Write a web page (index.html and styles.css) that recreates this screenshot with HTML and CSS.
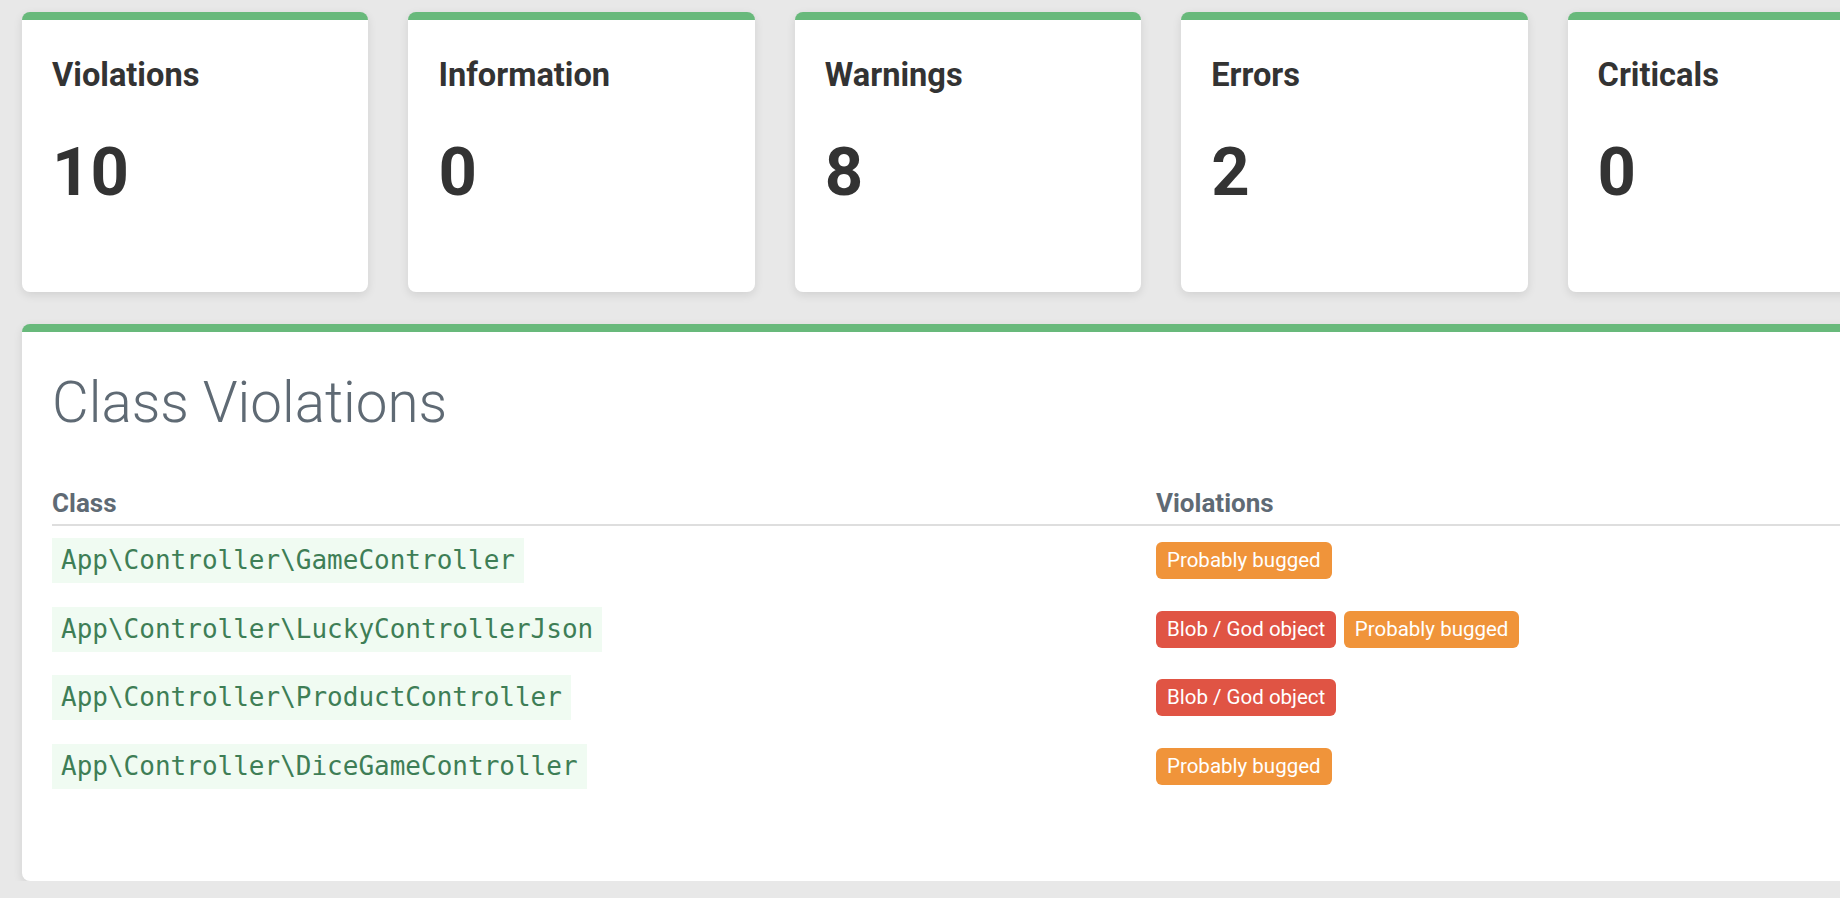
FILE: index.html
```html
<!DOCTYPE html>
<html lang="en">
<head>
<meta charset="utf-8">
<title>Class Violations</title>
<link rel="stylesheet" href="styles.css">
</head>
<body>
<main class="page">
  <section class="stats">
    <div class="card">
      <h3 class="card-label">Violations</h3>
      <div class="card-value">10</div>
    </div>
    <div class="card">
      <h3 class="card-label">Information</h3>
      <div class="card-value">0</div>
    </div>
    <div class="card">
      <h3 class="card-label">Warnings</h3>
      <div class="card-value">8</div>
    </div>
    <div class="card">
      <h3 class="card-label">Errors</h3>
      <div class="card-value">2</div>
    </div>
    <div class="card">
      <h3 class="card-label">Criticals</h3>
      <div class="card-value">0</div>
    </div>
  </section>

  <section class="panel">
    <h1 class="panel-title">Class Violations</h1>
    <table class="vtable">
      <thead>
        <tr>
          <th class="col-class">Class</th>
          <th>Violations</th>
        </tr>
      </thead>
      <tbody>
        <tr>
          <td><code class="cls">App\Controller\GameController</code></td>
          <td><div class="badges"><span class="badge badge-warn">Probably bugged</span></div></td>
        </tr>
        <tr>
          <td><code class="cls">App\Controller\LuckyControllerJson</code></td>
          <td><div class="badges"><span class="badge badge-err">Blob / God object</span><span class="badge badge-warn">Probably bugged</span></div></td>
        </tr>
        <tr>
          <td><code class="cls">App\Controller\ProductController</code></td>
          <td><div class="badges"><span class="badge badge-err">Blob / God object</span></div></td>
        </tr>
        <tr>
          <td><code class="cls">App\Controller\DiceGameController</code></td>
          <td><div class="badges"><span class="badge badge-warn">Probably bugged</span></div></td>
        </tr>
      </tbody>
    </table>
  </section>
</main>
</body>
</html>
```

FILE: styles.css
```css
html, body {
  margin: 0;
  padding: 0;
  overflow: hidden;
}

body {
  background: #e8e8e8;
  font-family: Roboto, "Liberation Sans", Arial, sans-serif;
  color: #333333;
}

.page {
  width: 1892px;
  padding: 12px 0 0 22px;
  display: flex;
  flex-direction: column;
  gap: 32px;
}

.stats {
  display: grid;
  grid-template-columns: repeat(5, 1fr);
  gap: 40px;
}

.card {
  background: #ffffff;
  border-top: 8px solid #68b97b;
  border-radius: 8px;
  box-shadow: 0 3px 10px rgba(0, 0, 0, 0.10);
  height: 280px;
  box-sizing: border-box;
  padding: 36px 30px 0;
}

.card-label {
  margin: 0;
  font-size: 32.6px;
  line-height: 38px;
  font-weight: 700;
  color: #333333;
}

.card-value {
  margin-top: 35px;
  font-size: 67px;
  line-height: 86px;
  font-weight: 700;
  color: #333333;
}

.panel {
  background: #ffffff;
  border-top: 8px solid #68b97b;
  border-radius: 8px;
  box-shadow: 0 3px 10px rgba(0, 0, 0, 0.10);
  height: 557px;
  box-sizing: border-box;
  padding: 36px 30px 0;
}

.panel-title {
  margin: 0;
  font-size: 56.5px;
  line-height: 70px;
  font-weight: 300;
  color: #5f6a74;
}

.vtable {
  margin-top: 49px;
  width: 100%;
  border-collapse: collapse;
}

.vtable th {
  text-align: left;
  font-size: 26px;
  line-height: 32px;
  font-weight: 700;
  color: #5f6a74;
  padding: 0 0 5px;
  border-bottom: 2px solid #dedede;
}

.vtable th.col-class {
  width: 1104px;
}

.vtable td {
  padding: 12px 0 11.5px;
  vertical-align: middle;
}

.cls {
  display: inline-block;
  font-family: "DejaVu Sans Mono", "Liberation Mono", monospace;
  font-size: 26px;
  line-height: 31px;
  padding: 7px 9px;
  background: #f0fbf2;
  color: #3e7e56;
}

.badges {
  display: flex;
  gap: 7.5px;
}

.badge {
  display: inline-block;
  font-size: 20.5px;
  line-height: 25px;
  padding: 6px 11px;
  border-radius: 6px;
  color: #ffffff;
  font-weight: 400;
}

.badge-warn {
  background: #f0943a;
}

.badge-err {
  background: #e05444;
}
```
